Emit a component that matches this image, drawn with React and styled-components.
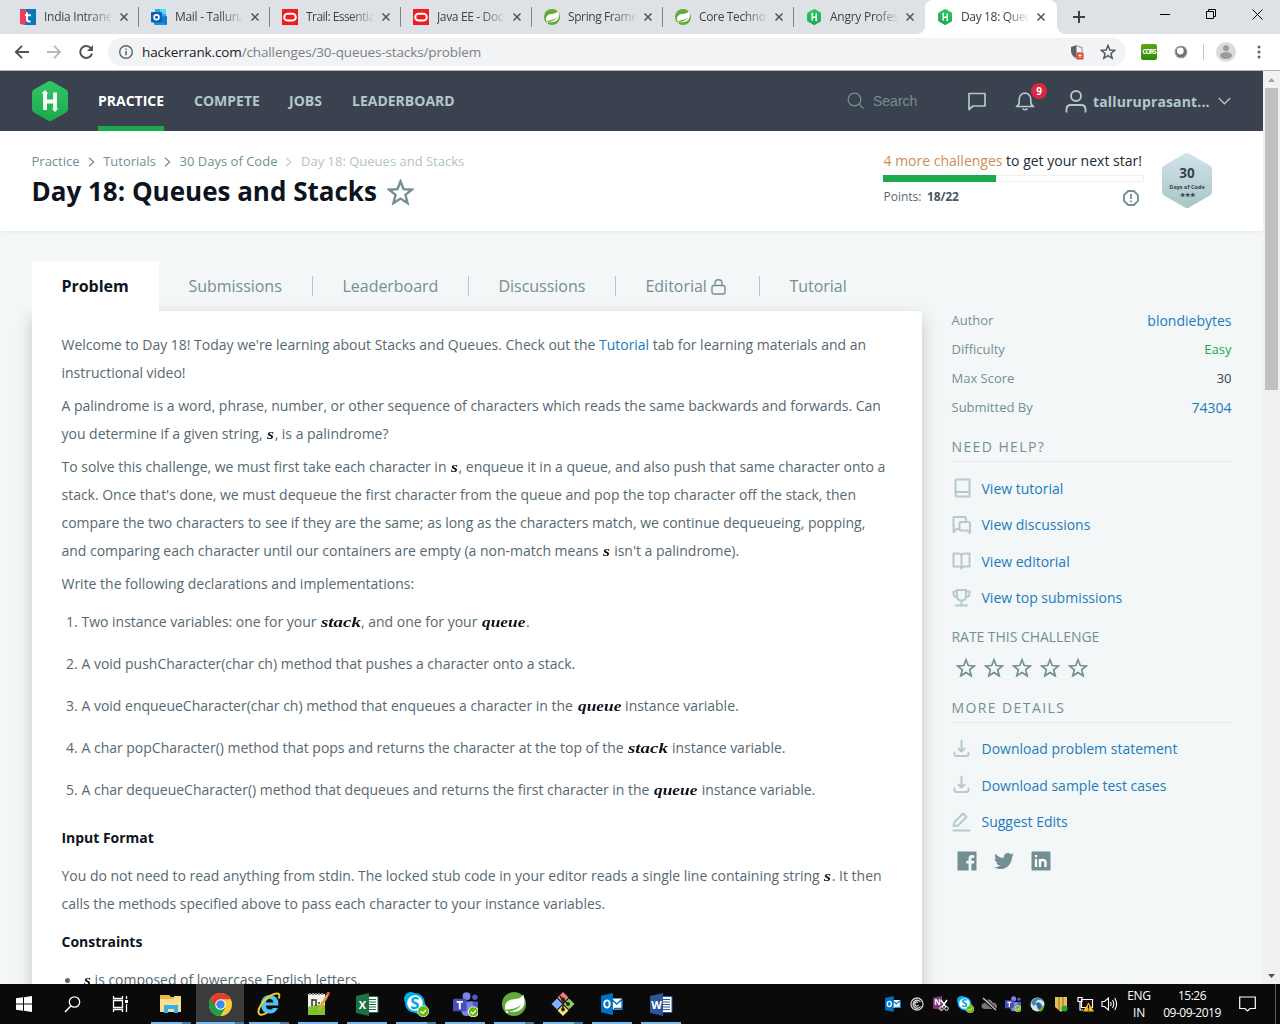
import React from "react";
import styled, { createGlobalStyle } from "styled-components";
import { FaTwitter } from "react-icons/fa";

const Global = createGlobalStyle`
  * { box-sizing: border-box; }
  html, body { margin: 0; padding: 0; overflow: hidden; }
  body { font-family: "Open Sans", "Noto Sans", sans-serif; }
  svg { display: block; flex: none; }
`;

const Screen = styled.div`
  width: 1280px;
  height: 1024px;
  display: flex;
  flex-direction: column;
  overflow: hidden;
  background: #fff;
`;

/* ---------- browser chrome ---------- */
const TabStrip = styled.div`
  height: 34px;
  flex: none;
  display: flex;
  background: #dee1e6;
  padding-left: 8px;
`;
const BrowserTab = styled.div`
  position: relative;
  width: ${(p) => (p.$active ? 132 : 131)}px;
  height: 34px;
  flex: none;
  display: flex;
  align-items: center;
  padding: 0 0 0 12px;
  background: ${(p) => (p.$active ? "#fff" : "transparent")};
  border-radius: 8px 8px 0 0;
  &::before, &::after {
    content: "";
    display: ${(p) => (p.$active ? "block" : "none")};
    position: absolute;
    bottom: 0;
    width: 8px;
    height: 8px;
  }
  &::before { left: -8px; background: radial-gradient(circle at 0 0, transparent 7.5px, #fff 8px); }
  &::after { right: -8px; background: radial-gradient(circle at 100% 0, transparent 7.5px, #fff 8px); }
`;
const TabTitle = styled.span`
  width: 67px;
  margin-left: 8px;
  font-size: 12px;
  letter-spacing: ${(p) => p.$ls || -0.25}px;
  line-height: 16px;
  white-space: nowrap;
  overflow: hidden;
  color: #3f4347;
  mask-image: linear-gradient(to right, #000 44px, transparent 70px);
`;
const CloseIcon = styled.svg`
  margin-left: 9px;
`;
const TabRule = styled.span`
  width: 1px;
  height: 20px;
  margin-left: auto;
  background: #808488;
`;
const NewTab = styled.svg`
  margin: 11px 0 0 16px;
`;
const WindowButtons = styled.div`
  display: flex;
  margin-left: auto;
  height: 28px;
`;
const WindowButton = styled.div`
  width: 46px;
  display: flex;
  align-items: center;
  justify-content: center;
`;
const Toolbar = styled.div`
  height: 37px;
  flex: none;
  display: flex;
  align-items: center;
  padding: 0 14px 1px;
  border-bottom: 1px solid #b4b6b6;
`;
const NavIcons = styled.div`
  display: flex;
  gap: 16px;
  width: 94px;
`;
const Omnibox = styled.div`
  width: 1018px;
  height: 28px;
  border-radius: 14px;
  background: #f1f3f4;
  display: flex;
  align-items: center;
  padding: 0 10px 0 10px;
  font-size: 13.5px;
  color: #202124;
`;
const Url = styled.span`
  margin-left: 8px;
  letter-spacing: -0.13px;
  white-space: nowrap;
  span { color: #7c8084; }
`;
const OmniActions = styled.div`
  margin-left: auto;
  display: flex;
  align-items: center;
  gap: 15px;
`;
const Cors = styled.div`
  width: 16px;
  height: 16px;
  margin-left: 15px;
  border-radius: 2px;
  background: linear-gradient(#5aa812, #2f8a05);
  color: #fff;
  font: bold 6.5px/16px "Open Sans", sans-serif;
  letter-spacing: -0.9px;
  text-align: center;
`;
const ToolDivider = styled.span`
  width: 1px;
  height: 16px;
  margin: 0 12px 0 15px;
  background: #c5c7ca;
`;

/* ---------- page ---------- */
const Viewport = styled.div`
  flex: 1;
  min-height: 0;
  display: flex;
`;
const Page = styled.div`
  width: 1263px;
  height: 100%;
  overflow: hidden;
  display: flex;
  flex-direction: column;
  background: #f3f7f7;
`;
const Scrollbar = styled.div`
  width: 17px;
  display: flex;
  flex-direction: column;
  align-items: center;
  justify-content: space-between;
  background: #f1f1f1;
`;
const Thumb = styled.div`
  width: 13px;
  height: 302px;
  background: #c1c1c1;
  margin-bottom: auto;
`;
const ScrollArrow = styled.div`
  width: 17px;
  height: 17px;
  display: flex;
  align-items: center;
  justify-content: center;
`;

const TopNav = styled.nav`
  height: 60px;
  flex: none;
  display: flex;
  align-items: center;
  padding: 0 32px;
  background: #3b424f;
`;
const NavLinks = styled.div`
  display: flex;
  gap: 30px;
  margin-left: 30px;
  height: 60px;
`;
const NavLink = styled.a`
  display: flex;
  align-items: center;
  height: 60px;
  font-weight: 700;
  font-size: 14px;
  width: ${(p) => p.$w}px;
  white-space: nowrap;
  color: ${(p) => (p.$active ? "#fff" : "#b2c8cb")};
  border-bottom: ${(p) => (p.$active ? "5px solid #1ba94c" : "0")};
  padding: ${(p) => (p.$active ? "3px 0 0" : "0 0 2px")};
`;
const Search = styled.div`
  display: flex;
  align-items: center;
  gap: 8px;
  margin-left: auto;
  width: 120px;
  font: 14px "Liberation Sans", Arial, sans-serif;
  color: #738f93;
`;
const Bell = styled.div`
  position: relative;
  margin-left: 28px;
`;
const Badge = styled.span`
  position: absolute;
  left: 16px;
  top: -8px;
  width: 16px;
  height: 16px;
  border-radius: 8px;
  background: #dc2742;
  color: #fff;
  font-weight: 700;
  font-size: 10px;
  line-height: 16px;
  text-align: center;
`;
const User = styled.div`
  display: flex;
  align-items: center;
  margin-left: 30px;
  font-weight: 700;
  font-size: 14px;
  color: #b2c8cb;
  span { width: 117px; margin: 1px 8px 0 6px; letter-spacing: 0.15px; white-space: nowrap; }
`;

const PageHeader = styled.header`
  height: 100px;
  flex: none;
  display: flex;
  justify-content: space-between;
  padding: 20px 51px 0 31.5px;
  background: #fff;
  box-shadow: 0 1px 3px rgba(0, 0, 0, 0.06);
`;
const Crumbs = styled.div`
  display: flex;
  align-items: center;
  height: 20px;
  font-size: 13px;
  color: #738f93;
  white-space: nowrap;
  svg { margin: 2px 8.6px 0 8px; }
`;
const CrumbCurrent = styled.span`
  color: #b2c3c5;
`;
const TitleRow = styled.div`
  display: flex;
  align-items: center;
  gap: 10px;
  height: 40px;
  svg { margin-top: 3px; }
`;
const Title = styled.h1`
  margin: 0;
  width: 345px;
  font-size: 26px;
  font-weight: 700;
  letter-spacing: 0;
  white-space: nowrap;
  color: #0e141e;
`;
const ProgressArea = styled.div`
  display: flex;
  gap: 18px;
`;
const Progress = styled.div`
  width: 261px;
`;
const ProgressText = styled.div`
  height: 20px;
  padding-left: 0.5px;
  font-size: 14px;
  line-height: 20px;
  white-space: nowrap;
  color: #222b38;
  span { color: #cf8b56; }
`;
const Bar = styled.div`
  height: 7px;
  margin-top: 4px;
  border: 1px solid;
  background: linear-gradient(#1ba94c, #1ba94c) no-repeat 0 0 / 113px 7px;
  background-origin: border-box;
  background-clip: border-box;
  border-image: linear-gradient(to right, #1ba94c 113px, #eeeff0 113px) 1;
`;
const Points = styled.div`
  display: flex;
  align-items: center;
  height: 28px;
  padding: 0 5px 0 0.5px;
  font-size: 12px;
  color: #576871;
  b { margin-left: 5.5px; font-weight: 700; letter-spacing: -0.15px; color: #4a5661; }
  svg { margin: 3px 0 0 auto; }
`;

const Main = styled.main`
  flex: 1;
  min-height: 0;
  display: flex;
  gap: 29.5px;
  padding: 30px 31.5px 0 32px;
`;
const ProblemColumn = styled.section`
  width: 890px;
  flex: none;
`;
const Tabs = styled.div`
  display: flex;
  align-items: center;
  height: 50px;
`;
const PageTab = styled.div`
  width: ${(p) => p.$w}px;
  height: ${(p) => (p.$active ? 50 : 20)}px;
  display: flex;
  align-items: center;
  padding-left: 29.5px;
  font-size: 16px;
  letter-spacing: ${(p) => (p.$active ? -0.05 : -0.03)}px;
  white-space: nowrap;
  font-weight: ${(p) => (p.$active ? 700 : 400)};
  color: ${(p) => (p.$active ? "#0e141e" : "#738f93")};
  background: ${(p) => (p.$active ? "#fff" : "transparent")};
  border-right: ${(p) => (p.$rule ? "1px solid #b2c8cb" : "0")};
  svg { margin: 2px 0 0 4px; }
`;
const Card = styled.article`
  height: 800px;
  padding: 20px 29.5px;
  background: #fff;
  box-shadow: 0 6px 16px rgba(0, 0, 0, 0.2);
  color: #576871;
  font-size: 14px;
  line-height: 28px;
  white-space: nowrap;
`;
const Para = styled.p`
  margin: 0 0 5px;
`;
const Line = styled.span`
  display: block;
  height: 28px;
  letter-spacing: -0.015px;
`;
const Link = styled.a`
  color: #1b7cbc;
`;
const Steps = styled.ol`
  margin: 10px 0 20px;
  padding: 0 0 0 4.500px;
  list-style: none;
  display: flex;
  flex-direction: column;
  gap: 14px;
`;
const Step = styled.li`
  display: flex;
  height: 28px;
`;
const StepNo = styled.span`
  width: 15.500px;
`;
const SectionTitle = styled.h2`
  margin: 0 0 10px;
  height: 28px;
  font-size: 14px;
  line-height: 28px;
  font-weight: 700;
  letter-spacing: -0.03px;
  color: #0e141e;
`;
const SectionBody = styled.div`
  margin-bottom: 10px;
`;
const Bullet = styled.div`
  display: flex;
  align-items: center;
  height: 28px;
  &::before {
    content: "";
    width: 5px;
    height: 5px;
    margin: 0 13px 0 3px;
    border-radius: 50%;
    background: #576871;
  }
`;
const MathBox = styled.span`
  display: inline-block;
  width: ${(p) => p.$w}px;
  height: 28px;
  padding-left: 1px;
  vertical-align: top;
`;
const MathText = styled.i`
  display: inline-block;
  font: italic bold 15.5px/28px "Liberation Serif", "Times New Roman", serif;
  letter-spacing: 0;
  transform: scaleX(${(p) => p.$stretch});
  transform-origin: 0 50%;
  color: #0e141e;
`;

const Sidebar = styled.aside`
  width: 280px;
  padding-top: 44px;
`;
const Fact = styled.div`
  display: flex;
  justify-content: space-between;
  align-items: center;
  height: 29px;
  font-size: 13px;
  color: #738f93;
`;
const FactValue = styled.span`
  font-size: ${(p) => p.$size || 13}px;
  padding-top: ${(p) => (p.$size ? 2 : 0)}px;
  color: ${(p) => p.$color};
`;
const SideTitle = styled.h3`
  margin: ${(p) => p.$mt}px 0 0;
  height: 30px;
  font-size: 14px;
  line-height: 30px;
  font-weight: 400;
  letter-spacing: 1.4px;
  color: #738f93;
  border-bottom: 1px solid #e4e9ea;
`;
const SideLinks = styled.div`
  padding-top: ${(p) => p.$pt || 8}px;
`;
const SideLink = styled.a`
  display: flex;
  align-items: center;
  height: 36.5px;
  gap: 10px;
  font-size: 14px;
  color: #1b7cbc;
  white-space: nowrap;
`;
const RateTitle = styled.div`
  height: 20px;
  margin-top: 11px;
  font-size: 14px;
  line-height: 20px;
  letter-spacing: -0.05px;
  color: #738f93;
`;
const Stars = styled.div`
  display: flex;
  gap: 8px;
  padding: 11px 0 0 4px;
`;
const Social = styled.div`
  display: flex;
  align-items: center;
  gap: 17px;
  margin: 10.5px 0 0 5.500px;
  color: #738f93;
`;

/* ---------- taskbar ---------- */
const Taskbar = styled.footer`
  height: 40px;
  flex: none;
  display: flex;
  background: #0a0a0a;
  color: #fff;
`;
const SystemButton = styled.div`
  width: 48px;
  display: flex;
  align-items: center;
  justify-content: center;
`;
const Apps = styled.div`
  display: flex;
  margin-left: 3px;
  gap: 1px;
`;
const AppButton = styled.div`
  position: relative;
  width: 48px;
  height: 40px;
  display: flex;
  align-items: center;
  justify-content: center;
  background: ${(p) => (p.$active ? "#3b3b3b" : "transparent")};
  &::after {
    content: "";
    position: absolute;
    left: ${(p) => (p.$active ? 0 : 4)}px;
    right: ${(p) => (p.$active ? 0 : 4)}px;
    bottom: 0;
    height: 2px;
    background: ${(p) =>
      p.$stacked
        ? "linear-gradient(to right, #76b9ed calc(100% - 9px), #4d7b9f calc(100% - 9px))"
        : "#76b9ed"};
  }
`;
const Tray = styled.div`
  display: flex;
  align-items: center;
  margin-left: auto;
  width: 399px;
`;
const TrayIcon = styled.div`
  width: 24px;
  display: flex;
  justify-content: center;
`;
const TrayText = styled.div`
  width: ${(p) => p.$w}px;
  font-size: 12px;
  line-height: 17px;
  letter-spacing: ${(p) => p.$ls}px;
  text-align: center;
  white-space: nowrap;
`;
const ShowDesktop = styled.div`
  width: 5px;
  height: 40px;
  margin-left: auto;
  border-left: 1px solid #5a5a5a;
`;

/* ---------- icons ---------- */
const Svg = ({ w = 16, h = w, vb, children, ...rest }) => (
  <svg width={w} height={h} viewBox={vb || `0 0 ${w} ${h}`} fill="none" {...rest}>
    {children}
  </svg>
);
const Letter = ({ x, y, size, children, fill = "#fff" }) => (
  <text x={x} y={y} fontSize={size} fill={fill} fontWeight="700" textAnchor="middle" fontFamily="Open Sans, sans-serif">
    {children}
  </text>
);

const HackerRank = ({ w, h }) => (
  <Svg w={w} h={h} vb="0 0 36 40">
    <defs>
      <linearGradient id="hr" x1="0" y1="0" x2="0" y2="1">
        <stop offset="0" stopColor="#32c766" />
        <stop offset="1" stopColor="#1ba94c" />
      </linearGradient>
    </defs>
    <path d="M16 .6q2-1.1 4 0l14 8q2 1.2 2 3.4v16q0 2.200-2 3.400l-14 8q-2 1.100-4 0l-14-8q-2-1.200-2-3.400V12q0-2.200 2-3.400z" fill="url(#hr)" />
    <path d="M13 11.500v17.500M23 11.500v17M13 20.500h10" stroke="#fff" strokeWidth="3.800" />
    <path d="M9.300 12.500L13 9l3.300 3.500zM19.800 27.500l3.200 3.500 3.400-3.500z" fill="#fff" />
  </Svg>
);
const IntranetIcon = () => (
  <Svg w={16}>
    <path d="M0 0h16v16H5z" fill="#0b77b5" />
    <path d="M0 1l6-1 2 7-3 9-5-1z" fill="#ee3d62" />
    <path d="M7 3.500v7q0 2 2.200 2h1.300M5 6.300h6" stroke="#fff" strokeWidth="2" />
  </Svg>
);
const OutlookNewIcon = () => (
  <Svg w={16}>
    <path d="M4 0h11v11H4z" fill="#28a8ea" />
    <path d="M9 0h6v5H9z" fill="#50d9ff" />
    <path d="M3 9l13-2v8q0 1-1 1H4q-1 0-1-1z" fill="#1490df" />
    <path d="M3 9l13 7V7z" fill="#0a63b5" opacity=".45" />
    <rect y="3" width="11" height="10.500" rx="1" fill="#0f5fb0" />
    <circle cx="5.500" cy="8.200" r="2.400" stroke="#fff" strokeWidth="1.700" />
  </Svg>
);
const OracleIcon = () => (
  <Svg w={16}>
    <rect width="16" height="16" fill="#ee1c25" />
    <rect x="2.200" y="4.800" width="11.600" height="6.800" rx="3.400" stroke="#fff" strokeWidth="2" />
  </Svg>
);
const SpringIcon = ({ w = 16 }) => (
  <Svg w={w} vb="0 0 24 24">
    <circle cx="12" cy="12" r="12" fill="#63ab37" />
    <path d="M21.300 2.500c1.500 5 1.800 9.500-.6 13-3 4.500-9 4.800-14.700 4 7.500-.5 11-3 13-7-3.500 3.500-7 4.300-15.500 5.500C2 13 4 8.500 10 7.500c5-.8 8.500-.5 11.300-5z" fill="#fff" />
    <circle cx="5" cy="20" r="1.200" fill="#fff" />
  </Svg>
);
const Star = ({ size, color, sw = 1.5 }) => (
  <Svg w={size} vb="0 0 20 20">
    <path d="M10 1.800l2.300 5.700 6.100.4-4.700 3.900 1.500 6-5.200-3.300-5.200 3.300 1.500-6L1.600 7.900l6.100-.4z" stroke={color} strokeWidth={sw} />
  </Svg>
);
const Chevron = ({ color }) => (
  <Svg w={7} h={10}>
    <path d="M1 .8L5.700 5 1 9.200" stroke={color} strokeWidth="1.200" />
  </Svg>
);
const Line20 = ({ children }) => (
  <Svg w={20} stroke="#b6c9cc" strokeWidth="2" strokeLinejoin="round" strokeLinecap="round">
    {children}
  </Svg>
);
const BookIcon = () => (
  <Line20>
    <path d="M3.500 16.500V3q0-1.500 1.500-1.500h12.500v17H5.500q-2 0-2-2t2-2.500h12" />
  </Line20>
);
const ChatsIcon = () => (
  <Line20>
    <path d="M14 5.500V4q0-2-2-2H1.500v15l3-3h2" />
    <path d="M7.500 8.500Q7.500 7 9 7h7q2 0 2 2v9l-2.500-2.500H9q-1.500 0-1.500-1.500z" />
  </Line20>
);
const OpenBookIcon = () => (
  <Line20>
    <path d="M9.500 4.500Q9 2.500 6.500 2.500h-5v13h5q2.500 0 3 2 .5-2 3-2h5v-13h-5q-2.500 0-3 2zv13" />
  </Line20>
);
const TrophyIcon = () => (
  <Line20>
    <path d="M5 2h9v6q0 4.500-4.500 4.500T5 8zM5 3.500H1.500V6q0 3 3.500 3M14 3.500h3.500V6q0 3-3.500 3M9.500 12.500v4M4 17.500h11" />
  </Line20>
);
const DownloadIcon = () => (
  <Line20>
    <path d="M9.500 1.500v11M6.500 9.500l3 3 3-3M2.500 13.500V15q0 2 2 2h10q2 0 2-2v-1.500" />
  </Line20>
);
const EditIcon = () => (
  <Line20>
    <path d="M1.500 14l1-4L11 1.500l3.500 3.500L6 13.500l-4.500.5zM1.500 18.500h16" />
  </Line20>
);
const OutlookIcon = ({ w = 22 }) => (
  <Svg w={w} vb="0 0 24 24">
    <path d="M9 6h14v12H9z" fill="#fff" />
    <path d="M12 7l5 5 6-5M14 17h9V8" stroke="#0072c6" strokeWidth="1.600" />
    <path d="M0 3l13-3v24L0 21z" fill="#0072c6" />
    <ellipse cx="6.500" cy="12" rx="3" ry="4" stroke="#fff" strokeWidth="2" />
  </Svg>
);
const SkypeIcon = ({ w = 24 }) => (
  <Svg w={w} vb="0 0 24 24">
    <circle cx="6.500" cy="6.500" r="6.500" fill="#00aff0" />
    <circle cx="15" cy="15" r="6.500" fill="#00aff0" />
    <circle cx="10.500" cy="10.500" r="8.500" fill="#fff" stroke="#00aff0" strokeWidth="2" />
    <Letter x={10.5} y={16} size={16} fill="#00a5e5">S</Letter>
    <circle cx="18.500" cy="18.500" r="5.300" fill="#6bb700" stroke="#e7f3d6" strokeWidth=".8" />
    <path d="M16 18.500l2 2 3.300-3.500" stroke="#fff" strokeWidth="1.200" />
  </Svg>
);
const TeamsIcon = ({ w = 24 }) => (
  <Svg w={w} vb="0 0 24 24">
    <circle cx="13" cy="4" r="3.800" fill="#7b83eb" />
    <circle cx="21" cy="5" r="2.600" fill="#5059c9" />
    <path d="M16 9h8v7q0 4-4 4h-4z" fill="#5059c9" />
    <path d="M8 9h11v8q0 6-6 6-4 0-5-4z" fill="#7b83eb" />
    <rect y="6.500" width="13" height="12" rx="1" fill="#464eb8" />
    <path d="M3.500 9.500h6M6.500 9.500v7" stroke="#fff" strokeWidth="1.800" />
    <circle cx="19.500" cy="19" r="4.800" fill="#6bb700" stroke="#e7f3d6" />
    <path d="M17 19l2 2 3-3.500" stroke="#fff" strokeWidth="1.200" />
  </Svg>
);
const OfficeIcon = ({ color, letter }) => (
  <Svg w={23} vb="0 0 23 23">
    <path d="M11 3.500h11v16H11z" fill="#fff" stroke={color} />
    <path d="M13 6.500h7M13 9h7M13 11.500h7M13 14h7M13 16.500h7" stroke={color} strokeWidth="1.200" />
    <path d="M0 3l13-3v23L0 20z" fill={color} />
    <Letter x={6.5} y={15.5} size={11}>{letter}</Letter>
  </Svg>
);
const ExplorerIcon = () => (
  <Svg w={22} h={20}>
    <path d="M0 1h9l2 2h10v15H0z" fill="#e9b64c" />
    <path d="M0 5h21v13H0z" fill="#fbdf8e" />
    <path d="M14 2h7v3h-7z" fill="#f8d775" />
    <path d="M4 11h14v8h-4v-4H8v4H4z" fill="#34b0ea" />
  </Svg>
);
const ChromeIcon = () => (
  <Svg w={23} vb="0 0 24 24">
    <circle cx="12" cy="12" r="12" fill="#fcc934" />
    <path d="M12 12L1.600 6A12 12 0 0 0 12 24l5.200-9z" fill="#1e9e4a" />
    <path d="M12 6.600h10.700A12 12 0 0 0 1.600 6l5.300 9 1-5z" fill="#e33b2e" />
    <circle cx="12" cy="12" r="5.500" fill="#fff" />
    <circle cx="12" cy="12" r="4.400" fill="#4285f4" />
  </Svg>
);
const IeIcon = () => (
  <Svg w={24}>
    <path d="M21 16q-2.500 5.500-8.500 5.500-8.500 0-8.500-9T12.500 3Q22 3 21.500 13.500H9q0 4 3.700 4 2.300 0 3.300-1.500zM9 10.500h7.500Q16 7 12.700 7T9 10.500z" fill="#4cc3f5" />
    <path d="M3 22.500C-2 20 6 6.500 16 2.500c6-2.500 7.500 0 5.500 4M3 22.500q3 1 7-2" stroke="#f5c72c" strokeWidth="2" />
  </Svg>
);
const NotepadIcon = () => (
  <Svg w={23} h={24}>
    <path d="M1 2h17v21H1z" fill="#f0f3ea" />
    <path d="M1 15q8-3 17-2v10H1z" fill="#7ac52c" />
    <path d="M2 2h15" stroke="#878b84" strokeWidth="2" strokeDasharray="2 1" />
    <path d="M5 7v7M5 8h4v6M11 11h2M14 11h2" stroke="#333" strokeWidth="1.500" />
    <path d="M21 2L12 18" stroke="#e9a23b" strokeWidth="2.600" />
    <path d="M22 0l-1.500 3" stroke="#d35555" strokeWidth="3" />
  </Svg>
);
const GitIcon = () => (
  <Svg w={24}>
    <path d="M12 0l5.500 5.500L12 11 6.500 5.500z" fill="#f27a7a" />
    <path d="M6 6.500l5.500 5.500L6 17.500.5 12z" fill="#80b3ff" />
    <path d="M18 6.500l5.500 5.500-5.500 5.500-5.500-5.500z" fill="#8fce5c" />
    <path d="M12 13l5.500 5.500L12 24l-5.500-5.500z" fill="#ffe27a" />
    <path d="M9 4l3 4v10M12 8l5 4" stroke="#2d1f17" strokeWidth="1.500" />
    <circle cx="12" cy="7.500" r="1.900" fill="#2d1f17" />
    <circle cx="17" cy="12" r="1.900" fill="#2d1f17" />
    <circle cx="12" cy="17.500" r="1.900" fill="#2d1f17" />
  </Svg>
);

const tabs = [
  { title: "India Intrane", icon: <IntranetIcon /> },
  { title: "Mail - Talluru", icon: <OutlookNewIcon />, ls: -0.3 },
  { title: "Trail: Essentia", icon: <OracleIcon />, ls: -0.55 },
  { title: "Java EE - Doc", icon: <OracleIcon />, ls: -0.35 },
  { title: "Spring Frame", icon: <SpringIcon />, ls: -0.4 },
  { title: "Core Technol", icon: <SpringIcon />, ls: -0.35 },
  { title: "Angry Profes", icon: <HackerRank w={14.5} h={16} /> },
  { title: "Day 18: Queu", icon: <HackerRank w={14.5} h={16} />, ls: -0.35, active: true },
];

const IconSlot = styled.span`
  width: 16px;
  display: flex;
  justify-content: center;
`;
const ExtensionIcon = styled.svg`
  margin-left: 17px;
`;
const MenuDots = styled.svg`
  margin-left: 21px;
`;
const StarBadge = styled.svg`
  margin-top: 1px;
`;
const ActionCenter = styled.svg`
  margin-left: 12px;
`;

function Browser() {
  return (
    <>
      <TabStrip>
        {tabs.map((t, i) => (
          <BrowserTab key={t.title} $active={t.active}>
            <IconSlot>{t.icon}</IconSlot>
            <TabTitle $ls={t.ls}>{t.title}</TabTitle>
            <CloseIcon width="8" height="8" viewBox="0 0 8 8">
              <path d="M.5.5l7 7m0-7l-7 7" stroke="#4f5357" strokeWidth="1.500" />
            </CloseIcon>
            {i < 6 && <TabRule />}
          </BrowserTab>
        ))}
        <NewTab width="12" height="12" viewBox="0 0 12 12">
          <path d="M6 0v12M0 6h12" stroke="#3c4043" strokeWidth="2" />
        </NewTab>
        <WindowButtons>
          <WindowButton>
            <Svg w={10}><path d="M0 5.500h10" stroke="#000" /></Svg>
          </WindowButton>
          <WindowButton>
            <Svg w={10}><path d="M.5 2.500h7v7h-7zM2.500 2.500v-2h7v7h-2" stroke="#000" /></Svg>
          </WindowButton>
          <WindowButton>
            <Svg w={11}><path d="M.5.5l10 10m0-10l-10 10" stroke="#000" /></Svg>
          </WindowButton>
        </WindowButtons>
      </TabStrip>
      <Toolbar>
        <NavIcons>
          <Svg w={16}><path d="M15 8H2M8 1.800L1.800 8 8 14.200" stroke="#50545a" strokeWidth="1.900" /></Svg>
          <Svg w={16}><path d="M1 8h13M8 1.800L14.200 8 8 14.200" stroke="#b8babd" strokeWidth="1.900" /></Svg>
          <Svg w={16}><path d="M13 4.300A6 6 0 1 0 14 9.500" stroke="#50545a" strokeWidth="2" /><path d="M15 1v6H9z" fill="#50545a" /></Svg>
        </NavIcons>
        <Omnibox>
          <Svg w={16}>
            <circle cx="8" cy="8" r="6.300" stroke="#5f6368" strokeWidth="1.400" />
            <path d="M8 7v4.300M8 4.400v1.400" stroke="#5f6368" strokeWidth="1.500" />
          </Svg>
          <Url>hackerrank.com<span>/challenges/30-queues-stacks/problem</span></Url>
          <OmniActions>
            <Svg w={16}>
              <path d="M7.500 1L2 3v4q0 5 5.500 7.500z" fill="#5f6368" />
              <path d="M7.500 1.700L13 3.700V8" stroke="#a5a8ab" strokeWidth="1.400" />
              <rect x="7.500" y="8.500" width="7" height="7" fill="#db4437" />
              <path d="M9.500 10.500l3 3m0-3l-3 3" stroke="#fff" strokeWidth="1.100" />
            </Svg>
            <Star size={16} color="#50545a" sw={1.8} />
          </OmniActions>
        </Omnibox>
        <Cors>CORS</Cors>
        <ExtensionIcon width="14" height="14" fill="none">
          <circle cx="7" cy="7" r="6.300" fill="#6e6e6e" />
          <circle cx="7" cy="7" r="5.700" stroke="#a9a9a9" />
          <circle cx="6.300" cy="6" r="3.400" fill="#fff" />
        </ExtensionIcon>
        <ToolDivider />
        <Svg w={20}>
          <circle cx="10" cy="10" r="10" fill="#dadbdc" />
          <circle cx="10" cy="6.300" r="3" fill="#9a9b9c" />
          <ellipse cx="10" cy="13.500" rx="6" ry="3.500" fill="#9a9b9c" />
        </Svg>
        <MenuDots width="4" height="14">
          <circle cx="2" cy="2" r="1.500" fill="#5f6368" />
          <circle cx="2" cy="7" r="1.500" fill="#5f6368" />
          <circle cx="2" cy="12" r="1.500" fill="#5f6368" />
        </MenuDots>
      </Toolbar>
    </>
  );
}

function Navigation() {
  return (
    <TopNav>
      <HackerRank w={36} h={40} />
      <NavLinks>
        <NavLink $active $w={66}>PRACTICE</NavLink>
        <NavLink $w={65}>COMPETE</NavLink>
        <NavLink $w={33}>JOBS</NavLink>
        <NavLink $w={103}>LEADERBOARD</NavLink>
      </NavLinks>
      <Search>
        <Svg w={18}>
          <circle cx="7.500" cy="7.500" r="6.300" stroke="#738f93" strokeWidth="1.300" />
          <path d="M12 12l4.500 4.500" stroke="#738f93" strokeWidth="1.300" />
        </Svg>
        Search
      </Search>
      <Svg w={20}>
        <path d="M2 2.500h16V15H6l-4 3.500z" stroke="#b2c8cb" strokeWidth="1.700" strokeLinejoin="round" />
      </Svg>
      <Bell>
        <Svg w={20}>
          <path d="M1.500 15.500Q4.200 14.500 4.200 10.500V8a5.800 5.800 0 0 1 11.600 0v2.500q0 4 2.700 5z" stroke="#b2c8cb" strokeWidth="1.700" strokeLinejoin="round" />
          <path d="M7.500 17.500q2.500 2.500 5 0" stroke="#b2c8cb" strokeWidth="1.700" />
        </Svg>
        <Badge>9</Badge>
      </Bell>
      <User>
        <Svg w={22} h={23}>
          <circle cx="11" cy="6" r="5" stroke="#b2c8cb" strokeWidth="1.900" />
          <path d="M1.500 22.500v-3q0-4.500 4.500-4.500h10q4.500 0 4.500 4.500v3" stroke="#b2c8cb" strokeWidth="1.900" />
        </Svg>
        <span>talluruprasant...</span>
        <Svg w={13} h={8}>
          <path d="M.7 1l5.800 5.800L12.300 1" stroke="#b2c8cb" strokeWidth="1.300" />
        </Svg>
      </User>
    </TopNav>
  );
}

function Header() {
  return (
    <PageHeader>
      <div>
        <Crumbs>
          Practice<Chevron color="#738f93" />Tutorials<Chevron color="#738f93" />30 Days of Code
          <Chevron color="#c2cfd1" />
          <CrumbCurrent>Day 18: Queues and Stacks</CrumbCurrent>
        </Crumbs>
        <TitleRow>
          <Title>Day 18: Queues and Stacks</Title>
          <Star size={27} color="#738f93" sw={1.8} />
        </TitleRow>
      </div>
      <ProgressArea>
        <Progress>
          <ProgressText><span>4 more challenges</span> to get your next star!</ProgressText>
          <Bar />
          <Points>
            Points: <b>18/22</b>
            <Svg w={16}>
              <path d="M5.200 1h5.600L15 5.200v5.600L10.800 15H5.200L1 10.800V5.200z" stroke="#738f93" strokeWidth="1.900" strokeLinejoin="round" />
              <path d="M8 4v5M8 10.500v1.700" stroke="#738f93" strokeWidth="1.800" />
            </Svg>
          </Points>
        </Progress>
        <StarBadge width="50" height="57" fill="none">
          <defs>
            <linearGradient id="badge" x1="0" y1="0" x2="0" y2="1">
              <stop offset="0" stopColor="#cfe3ec" />
              <stop offset="1" stopColor="#aac5c3" />
            </linearGradient>
          </defs>
          <path d="M23 1.500q2-1 4 0l20.500 11.700Q50 14.600 50 17v23q0 2.300-2.500 3.800L27 55.500q-2 1-4 0L2.500 43.800Q0 42.300 0 40V17q0-2.400 2.500-3.800z" fill="url(#badge)" />
          <Letter x={25} y={25.5} size={13.5} fill="#39424e">30</Letter>
          <Letter x={25} y={37} size={5.5} fill="#39424e">Days of Code</Letter>
          <Letter x={25} y={45} size={6} fill="#39424e">★★★</Letter>
        </StarBadge>
      </ProgressArea>
    </PageHeader>
  );
}

const S = () => <MathBox $w={8.5}><MathText $stretch={1.15}>s</MathText></MathBox>;
const Stack = () => <MathBox $w={41}><MathText $stretch={1.22}>stack</MathText></MathBox>;
const Queue = () => <MathBox $w={45}><MathText $stretch={1.12}>queue</MathText></MathBox>;

function Problem() {
  return (
    <ProblemColumn>
      <Tabs>
        <PageTab $active $w={127}>Problem</PageTab>
        <PageTab $rule $w={154}>Submissions</PageTab>
        <PageTab $rule $w={156}>Leaderboard</PageTab>
        <PageTab $rule $w={147}>Discussions</PageTab>
        <PageTab $rule $w={144}>
          Editorial
          <Svg w={15} h={16}>
            <rect x="1" y="6.500" width="13" height="8.500" rx="2" stroke="#738f93" strokeWidth="1.400" />
            <path d="M4 6.500V4.200q0-3.400 3.500-3.400T11 4.200v2.300" stroke="#738f93" strokeWidth="1.400" />
          </Svg>
        </PageTab>
        <PageTab $w={100}>Tutorial</PageTab>
      </Tabs>
      <Card>
        <Para>
          <Line>Welcome to Day 18! Today we're learning about Stacks and Queues. Check out the <Link>Tutorial</Link> tab for learning materials and an</Line>
          <Line>instructional video!</Line>
        </Para>
        <Para>
          <Line>A palindrome is a word, phrase, number, or other sequence of characters which reads the same backwards and forwards. Can</Line>
          <Line>you determine if a given string, <S />, is a palindrome?</Line>
        </Para>
        <Para>
          <Line>To solve this challenge, we must first take each character in <S />, enqueue it in a queue, and also push that same character onto a</Line>
          <Line>stack. Once that's done, we must dequeue the first character from the queue and pop the top character off the stack, then</Line>
          <Line>compare the two characters to see if they are the same; as long as the characters match, we continue dequeueing, popping,</Line>
          <Line>and comparing each character until our containers are empty (a non-match means <S /> isn't a palindrome).</Line>
        </Para>
        <Para>
          <Line>Write the following declarations and implementations:</Line>
        </Para>
        <Steps>
          <Step><StepNo>1.</StepNo><Line>Two instance variables: one for your <Stack />, and one for your <Queue />.</Line></Step>
          <Step><StepNo>2.</StepNo><Line>A void pushCharacter(char ch) method that pushes a character onto a stack.</Line></Step>
          <Step><StepNo>3.</StepNo><Line>A void enqueueCharacter(char ch) method that enqueues a character in the <Queue /> instance variable.</Line></Step>
          <Step><StepNo>4.</StepNo><Line>A char popCharacter() method that pops and returns the character at the top of the <Stack /> instance variable.</Line></Step>
          <Step><StepNo>5.</StepNo><Line>A char dequeueCharacter() method that dequeues and returns the first character in the <Queue /> instance variable.</Line></Step>
        </Steps>
        <SectionTitle>Input Format</SectionTitle>
        <SectionBody>
          <Line>You do not need to read anything from stdin. The locked stub code in your editor reads a single line containing string <S />. It then</Line>
          <Line>calls the methods specified above to pass each character to your instance variables.</Line>
        </SectionBody>
        <SectionTitle>Constraints</SectionTitle>
        <Bullet><Line><S /> is composed of lowercase English letters.</Line></Bullet>
      </Card>
    </ProblemColumn>
  );
}

function Details() {
  return (
    <Sidebar>
      <Fact>Author<FactValue $size={14} $color="#1b7cbc">blondiebytes</FactValue></Fact>
      <Fact>Difficulty<FactValue $color="#1ba94c">Easy</FactValue></Fact>
      <Fact>Max Score<FactValue $color="#39424e">30</FactValue></Fact>
      <Fact>Submitted By<FactValue $size={14} $color="#1b7cbc">74304</FactValue></Fact>
      <SideTitle $mt={11}>NEED HELP?</SideTitle>
      <SideLinks>
        <SideLink><BookIcon />View tutorial</SideLink>
        <SideLink><ChatsIcon />View discussions</SideLink>
        <SideLink><OpenBookIcon />View editorial</SideLink>
        <SideLink><TrophyIcon />View top submissions</SideLink>
      </SideLinks>
      <RateTitle>RATE THIS CHALLENGE</RateTitle>
      <Stars>
        {[0, 1, 2, 3, 4].map((i) => <Star key={i} size={20} color="#738f93" sw={1.7} />)}
      </Stars>
      <SideTitle $mt={15}>MORE DETAILS</SideTitle>
      <SideLinks $pt={7.5}>
        <SideLink><DownloadIcon />Download problem statement</SideLink>
        <SideLink><DownloadIcon />Download sample test cases</SideLink>
        <SideLink><EditIcon />Suggest Edits</SideLink>
      </SideLinks>
      <Social>
        <Svg w={20}>
          <path fillRule="evenodd" d="M.5 .5h19v19h-5.100v-7h2.600l.3-2.700h-2.900V8q0-1.300 1.400-1.300h1.500V4.200q-5.700-1-5.700 3.300v2.300H9.300v2.700h2.300v7H.5z" fill="currentColor" />
        </Svg>
        <FaTwitter size={20} />
        <Svg w={20}>
          <rect x=".5" y=".5" width="19" height="19" rx="1" fill="currentColor" />
          <path d="M5 8v8M5 4v2.300M9 8v8M9 16v-4.500q0-2.500 2.800-2.500t2.700 2.500V16" stroke="#fff" strokeWidth="2.300" />
        </Svg>
      </Social>
    </Sidebar>
  );
}

function SystemTaskbar() {
  return (
    <Taskbar>
      <SystemButton>
        <Svg w={16}><path d="M0 2.300l7-1v6.200H0zM8 1.200L16 0v7.500H8zM0 8.500h7v6.200l-7-1zM8 8.500h8V16l-8-1.200z" fill="#fff" /></Svg>
      </SystemButton>
      <SystemButton>
        <Svg w={17}>
          <circle cx="10.500" cy="6" r="5.200" stroke="#fff" strokeWidth="1.300" />
          <path d="M7 9.800L1 16" stroke="#fff" strokeWidth="1.500" />
        </Svg>
      </SystemButton>
      <SystemButton>
        <Svg w={17}><path d="M1.500 4.500h9v7h-9zM1.500 0v2.500h9V0M1.500 16v-2.500h9V16M14.500 0v3M14.500 8v8" stroke="#fff" strokeWidth="1.300" /><path d="M13 4h3v3h-3z" fill="#fff" /></Svg>
      </SystemButton>
      <Apps>
        <AppButton $stacked><ExplorerIcon /></AppButton>
        <AppButton $active $stacked><ChromeIcon /></AppButton>
        <AppButton $stacked><IeIcon /></AppButton>
        <AppButton><NotepadIcon /></AppButton>
        <AppButton><OfficeIcon color="#1e7145" letter="X" /></AppButton>
        <AppButton $stacked><SkypeIcon w={25} /></AppButton>
        <AppButton><TeamsIcon w={25} /></AppButton>
        <AppButton $stacked><SpringIcon w={24} /></AppButton>
        <AppButton $stacked><GitIcon /></AppButton>
        <AppButton><OutlookIcon /></AppButton>
        <AppButton><OfficeIcon color="#2b579a" letter="W" /></AppButton>
      </Apps>
      <Tray>
        <TrayIcon><OutlookIcon w={16} /></TrayIcon>
        <TrayIcon>
          <Svg w={14}>
            <circle cx="7" cy="7" r="6" stroke="#ccc" strokeWidth="1.300" />
            <path d="M10.500 5A4 4 0 1 0 10.500 9.500M8 5.500A2 2 0 1 0 8.500 8" stroke="#ddd" strokeWidth="1.300" />
          </Svg>
        </TrayIcon>
        <TrayIcon>
          <Svg w={16}>
            <path d="M0 1.500L9 0v14l-9-1.500z" fill="#80397b" />
            <Letter x={4.5} y={9} size={8}>N</Letter>
            <path d="M8 4l5 7M14 4l-5 7" stroke="#fff" strokeWidth="1.500" />
            <circle cx="8.500" cy="12.500" r="1.800" stroke="#fff" />
            <circle cx="13.500" cy="12.500" r="1.800" stroke="#fff" />
          </Svg>
        </TrayIcon>
        <TrayIcon><SkypeIcon w={17} /></TrayIcon>
        <TrayIcon>
          <Svg w={16}>
            <path d="M3 13q-3-1-2.500-3.500T3.500 7q1-3.500 4-3.500t4 3q4 0 4.500 3.500t-3 3z" fill="#777" />
            <path d="M1 2l14 12" stroke="#111" strokeWidth="3" />
            <path d="M2 2l13 12" stroke="#ccc" strokeWidth="1.200" />
          </Svg>
        </TrayIcon>
        <TrayIcon><TeamsIcon w={16} /></TrayIcon>
        <TrayIcon>
          <Svg w={15}>
            <circle cx="7.500" cy="7.500" r="7" fill="#d9e4e8" />
            <path d="M1 6q2-5 7-5 4 0 6 4-3-3-6-2t-2 4l-2 2z" fill="#3d86ad" />
            <path d="M6 6q3-2 5 1t0 7q-4-1-5-8z" fill="#2865a5" />
            <path d="M9 12l5-4-1 5-3 2z" fill="#64a83b" />
          </Svg>
        </TrayIcon>
        <TrayIcon>
          <Svg w={14} h={16}>
            <path d="M1 1h12v10l-6 5-6-5z" fill="#e4c05c" />
            <path d="M5 1v13M9 1v13" stroke="#8e7128" />
            <circle cx="10.500" cy="12.500" r="3" fill="#21a83b" />
          </Svg>
        </TrayIcon>
        <TrayIcon>
          <Svg w={17} h={16}>
            <path d="M4.500 3.500h11v8h-11zM7 14.500h5M1 1.500h4v4H1zM3 5v9h3" stroke="#fff" strokeWidth="1.200" />
            <path d="M11.500 6.500L17 15.500H6z" fill="#f9b825" />
            <path d="M11.500 9v3.500M11.500 13.500v1" stroke="#000" strokeWidth="1.200" />
          </Svg>
        </TrayIcon>
        <TrayIcon>
          <Svg w={17} h={14}>
            <path d="M1 4.500h2.500l4-3.500v12l-4-3.500H1zM9.500 5q1.200 2 0 4M11.500 3q2.500 4 0 8M13.700 1q3.800 6 0 12" stroke="#fff" strokeWidth="1.100" />
          </Svg>
        </TrayIcon>
        <TrayText $w={36} $ls={-0.3}>ENG<br />IN</TrayText>
        <TrayText $w={70} $ls={-0.5}>15:26<br />09-09-2019</TrayText>
        <ActionCenter width="17" height="16" fill="none">
          <path d="M.7 1h15.600v11.500H11L8.500 15 6 12.500H.7z" stroke="#fff" strokeWidth="1.200" />
        </ActionCenter>
        <ShowDesktop />
      </Tray>
    </Taskbar>
  );
}

export default function App() {
  return (
    <Screen>
      <Global />
      <Browser />
      <Viewport>
        <Page>
          <Navigation />
          <Header />
          <Main>
            <Problem />
            <Details />
          </Main>
        </Page>
        <Scrollbar>
          <ScrollArrow><Svg w={7} h={4}><path d="M0 4l3.500-4L7 4z" fill="#a3a3a3" /></Svg></ScrollArrow>
          <Thumb />
          <ScrollArrow><Svg w={7} h={4}><path d="M0 0l3.500 4L7 0z" fill="#505050" /></Svg></ScrollArrow>
        </Scrollbar>
      </Viewport>
      <SystemTaskbar />
    </Screen>
  );
}
